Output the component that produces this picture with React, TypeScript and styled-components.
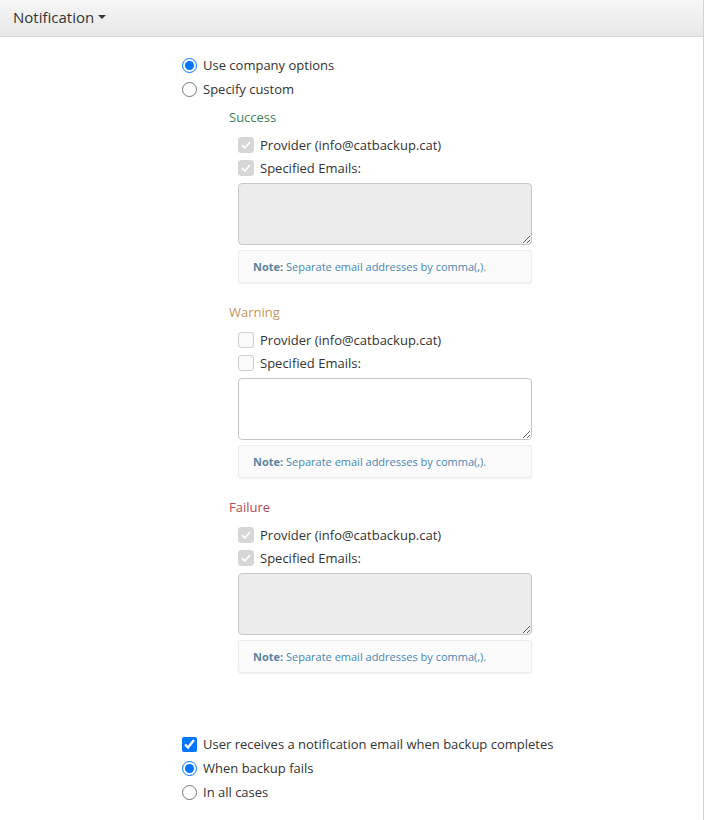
import React from 'react';
import styled, { createGlobalStyle } from 'styled-components';

const GlobalStyle = createGlobalStyle`
  html, body {
    margin: 0;
    padding: 0;
    background: #fff;
  }
  body {
    font-family: "Open Sans", "Noto Sans", sans-serif;
    font-size: 13px;
    color: #333;
  }
`;

type Tone = 'success' | 'warning' | 'failure';

const toneColors: Record<Tone, string> = {
  success: '#3f7f56',
  warning: '#c4965e',
  failure: '#b04a5a',
};

interface Section {
  title: string;
  tone: Tone;
  enabled: boolean;
}

const sections: Section[] = [
  { title: 'Success', tone: 'success', enabled: false },
  { title: 'Warning', tone: 'warning', enabled: true },
  { title: 'Failure', tone: 'failure', enabled: false },
];

export default function App() {
  return (
    <>
      <GlobalStyle />
      <StyledPanel>
        <StyledHeader>
          <StyledTitle>Notification</StyledTitle>
          <StyledCaret />
        </StyledHeader>

        <StyledBody>
          <StyledOptionRow>
            <StyledRadio type="radio" name="mode" defaultChecked />
            <span>Use company options</span>
          </StyledOptionRow>
          <StyledOptionRow>
            <StyledRadio type="radio" name="mode" />
            <span>Specify custom</span>
          </StyledOptionRow>

          <StyledSections>
            {sections.map((s) => (
              <StyledSection key={s.title}>
                <StyledSectionTitle $tone={s.tone}>{s.title}</StyledSectionTitle>
                <StyledChecks>
                  <StyledCheckRow>
                    <FakeCheck disabled={!s.enabled} />
                    <span>Provider (info@catbackup.cat)</span>
                  </StyledCheckRow>
                  <StyledCheckRow>
                    <FakeCheck disabled={!s.enabled} />
                    <span>Specified Emails:</span>
                  </StyledCheckRow>
                </StyledChecks>
                <StyledTextarea disabled={!s.enabled} />
                <StyledNote>
                  <StyledNoteLabel>Note:</StyledNoteLabel> Separate email addresses by comma(,).
                </StyledNote>
              </StyledSection>
            ))}
          </StyledSections>

          <StyledBottom>
            <StyledOptionRow>
              <StyledCheckbox type="checkbox" defaultChecked />
              <span>User receives a notification email when backup completes</span>
            </StyledOptionRow>
            <StyledOptionRow>
              <StyledRadio type="radio" name="when" defaultChecked />
              <span>When backup fails</span>
            </StyledOptionRow>
            <StyledOptionRow>
              <StyledRadio type="radio" name="when" />
              <span>In all cases</span>
            </StyledOptionRow>
          </StyledBottom>
        </StyledBody>
      </StyledPanel>
    </>
  );
}

function FakeCheck({ disabled }: { disabled: boolean }) {
  return (
    <StyledFakeCheck $disabled={disabled}>
      {disabled && (
        <svg width="12" height="12" viewBox="0 0 12 12">
          <path d="M2 6.2 L4.8 9 L10 3" fill="none" stroke="#fff" strokeWidth="1.8" />
        </svg>
      )}
    </StyledFakeCheck>
  );
}

const StyledPanel = styled.div`
  width: 704px;
  min-height: 820px;
  border-right: 1px solid #d4d4d4;
  box-sizing: border-box;
`;

const StyledHeader = styled.div`
  height: 37px;
  box-sizing: border-box;
  display: flex;
  align-items: center;
  padding: 0 0 3px 13px;
  background: linear-gradient(to bottom, #f6f6f6, #e8e8e8);
  border-bottom: 1px solid #d9d9d9;
`;

const StyledTitle = styled.span`
  font-size: 15px;
  color: #333;
`;

const StyledCaret = styled.span`
  margin-left: 4px;
  margin-top: 1px;
  width: 0;
  height: 0;
  border-left: 4px solid transparent;
  border-right: 4px solid transparent;
  border-top: 4px solid #333;
`;

const StyledBody = styled.div`
  padding: 16px 0 16px 182px;
`;

const StyledOptionRow = styled.label`
  display: flex;
  align-items: center;
  height: 24px;
  gap: 6px;
  color: #333;
`;

const StyledRadio = styled.input`
  margin: 0;
  width: 15px;
  height: 15px;
  accent-color: #0075ff;
`;

const StyledCheckbox = styled.input`
  margin: 0;
  width: 15px;
  height: 15px;
  accent-color: #0075ff;
`;

const StyledSections = styled.div`
  display: flex;
  flex-direction: column;
  gap: 19px;
  margin-top: 6px;
  padding-left: 47px;
`;

const StyledSection = styled.div`
  display: flex;
  flex-direction: column;
`;

const StyledSectionTitle = styled.div<{ $tone: Tone }>`
  line-height: 20px;
  color: ${(p) => toneColors[p.$tone]};
`;

const StyledChecks = styled.div`
  margin-top: 6px;
  padding-left: 9px;
`;

const StyledCheckRow = styled.div`
  display: flex;
  align-items: center;
  height: 23px;
  gap: 6px;
`;

const StyledFakeCheck = styled.span<{ $disabled: boolean }>`
  width: 16px;
  height: 16px;
  box-sizing: border-box;
  border-radius: 3px;
  display: flex;
  align-items: center;
  justify-content: center;
  background: ${(p) => (p.$disabled ? '#d6d6d6' : '#fafafa')};
  border: 1px solid ${(p) => (p.$disabled ? '#d6d6d6' : '#cfcfcf')};
`;

const StyledTextarea = styled.textarea`
  margin: 4px 0 0 9px;
  width: 294px;
  height: 62px;
  box-sizing: border-box;
  border: 1px solid #c4c4c4;
  border-radius: 4px;
  background: #fff;
  font-family: inherit;
  &:disabled {
    background: #ececec;
    border-color: #c8c8c8;
  }
`;

const StyledNote = styled.div`
  margin: 5px 0 0 9px;
  width: 294px;
  height: 33px;
  box-sizing: border-box;
  display: flex;
  align-items: center;
  padding-left: 14px;
  background: #fbfbfb;
  border: 1px solid #ececec;
  border-radius: 3px;
  box-shadow: 0 1px 2px rgba(0, 0, 0, 0.06);
  font-size: 11px;
  color: #4a86b3;
  white-space: pre;
`;

const StyledNoteLabel = styled.b`
  color: #5b83a0;
  font-weight: 700;
`;

const StyledBottom = styled.div`
  margin-top: 59px;
`;
